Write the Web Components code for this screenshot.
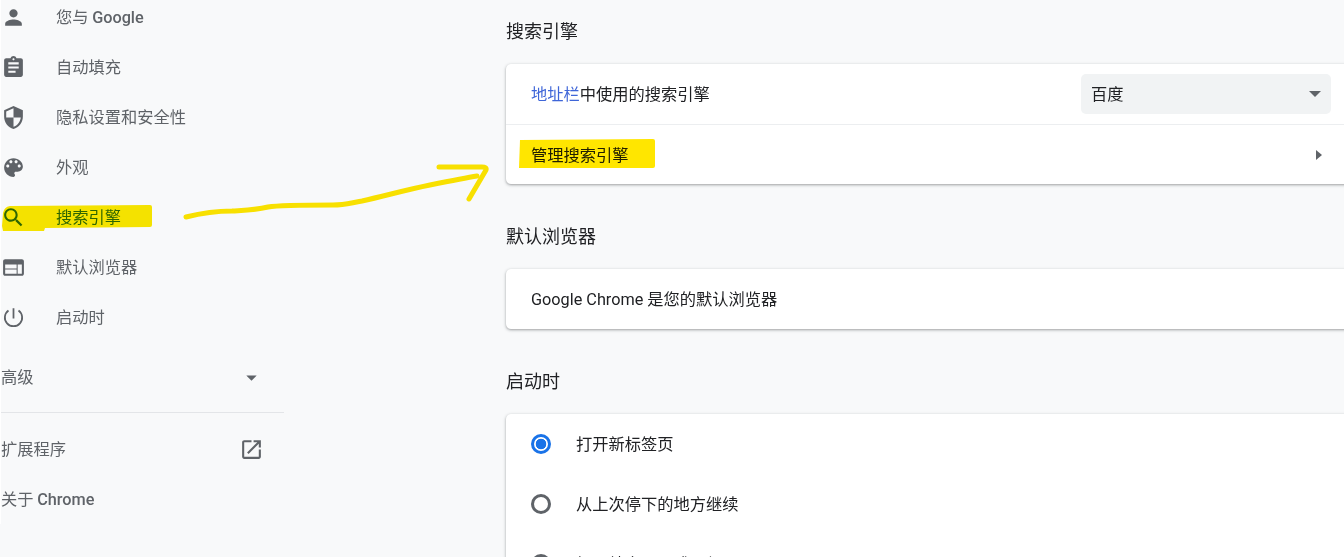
<!DOCTYPE html>
<html lang="zh-CN">
<head>
<meta charset="utf-8">
<title>设置</title>
<style>
  html, body { margin: 0; height: 100%; }
  body {
    background: #f8f9fa;
    overflow: hidden;
    font-family: "Noto Sans CJK SC", Roboto, sans-serif;
  }
  settings-row a { color: #3f66d8; }
  settings-row span { font-family: Roboto, "Noto Sans CJK SC", sans-serif; }
  nav-item b { font-family: Roboto, sans-serif; font-weight: 500; }
</style>
</head>
<body>

<settings-app>
  <settings-nav slot="nav">
    <nav-item icon="person">您与 <b>Google</b></nav-item>
    <nav-item icon="assignment">自动填充</nav-item>
    <nav-item icon="security">隐私设置和安全性</nav-item>
    <nav-item icon="palette">外观</nav-item>
    <nav-item icon="search" marked>搜索引擎</nav-item>
    <nav-item icon="web">默认浏览器</nav-item>
    <nav-item icon="power">启动时</nav-item>
    <nav-item plain trailing="arrow" class="advanced">高级</nav-item>
    <nav-item plain trailing="launch" class="extensions">扩展程序</nav-item>
    <nav-item plain>关于 <b>Chrome</b></nav-item>
  </settings-nav>

  <settings-section heading="搜索引擎">
    <settings-row>
      <span><a>地址栏</a>中使用的搜索引擎</span>
      <select-box slot="end">百度</select-box>
    </settings-row>
    <settings-row divided>
      管理搜索引擎
      <sub-arrow slot="end"></sub-arrow>
    </settings-row>
  </settings-section>

  <settings-section heading="默认浏览器">
    <settings-row><span>Google Chrome 是您的默认浏览器</span></settings-row>
  </settings-section>

  <settings-section heading="启动时">
    <radio-row checked>打开新标签页</radio-row>
    <radio-row>从上次停下的地方继续</radio-row>
    <radio-row>打开特定网页或一组网页</radio-row>
  </settings-section>
</settings-app>

<marker-layer></marker-layer>

<script>
  const ICONS = {
    person: 'M12 12c2.21 0 4-1.79 4-4s-1.79-4-4-4-4 1.79-4 4 1.79 4 4 4zm0 2c-2.67 0-8 1.34-8 4v2h16v-2c0-2.66-5.33-4-8-4z',
    assignment: 'M19 3h-4.18C14.4 1.84 13.3 1 12 1c-1.3 0-2.4.84-2.82 2H5c-1.1 0-2 .9-2 2v14c0 1.1.9 2 2 2h14c1.1 0 2-.9 2-2V5c0-1.1-.9-2-2-2zm-7 0c.55 0 1 .45 1 1s-.45 1-1 1-1-.45-1-1 .45-1 1-1zm2 14H7v-2h7v2zm3-4H7v-2h10v2zm0-4H7V7h10v2z',
    security: 'M12 1L3 5v6c0 5.55 3.84 10.74 9 12 5.16-1.26 9-6.45 9-12V5l-9-4zm0 10.99h7c-.53 4.12-3.28 7.79-7 8.94V12H5V6.3l7-3.11v8.8z',
    palette: 'M12 3c-4.97 0-9 4.03-9 9s4.03 9 9 9c.83 0 1.5-.67 1.5-1.5 0-.39-.15-.74-.39-1.01-.23-.26-.38-.61-.38-.99 0-.83.67-1.5 1.5-1.5H16c2.76 0 5-2.24 5-5 0-4.42-4.03-8-9-8zm-5.5 9c-.83 0-1.5-.67-1.5-1.5S5.67 9 6.5 9 8 9.67 8 10.5 7.33 12 6.5 12zm3-4C8.67 8 8 7.33 8 6.5S8.67 5 9.5 5s1.5.67 1.5 1.5S10.33 8 9.5 8zm5 0c-.83 0-1.5-.67-1.5-1.5S13.67 5 14.5 5s1.5.67 1.5 1.5S15.33 8 14.5 8zm3 4c-.83 0-1.5-.67-1.5-1.5S16.67 9 17.5 9s1.5.67 1.5 1.5-.67 1.5-1.5 1.5z',
    search: 'M15.5 14h-.79l-.28-.27C15.41 12.59 16 11.11 16 9.5 16 5.91 13.09 3 9.5 3S3 5.91 3 9.5 5.91 16 9.5 16c1.61 0 3.09-.59 4.23-1.57l.27.28v.79l5 4.99L20.49 19l-4.99-5zm-6 0C7.01 14 5 11.99 5 9.5S7.01 5 9.5 5 14 7.01 14 9.5 11.99 14 9.5 14z',
    web: 'M20 4H4c-1.1 0-1.99.9-1.99 2L2 18c0 1.1.9 2 2 2h16c1.1 0 2-.9 2-2V6c0-1.1-.9-2-2-2zm-5 14H4v-4h11v4zm0-5H4V9h11v4zm5 5h-4V9h4v9z',
    launch: 'M19 19H5V5h7V3H5c-1.11 0-2 .9-2 2v14c0 1.1.89 2 2 2h14c1.1 0 2-.9 2-2v-7h-2v7zM14 3v2h3.59l-9.83 9.83 1.41 1.41L19 6.41V10h2V3h-7z',
    arrow: 'M7 10l5 5 5-5z'
  }

  const svgIcon = (name) => {
    // the power icon in the reference is thinner than the stock filled one, so stroke it
    const body = name === 'power'
      ? '<path fill="none" stroke="currentColor" stroke-width="1.7" d="M12 3v10M7.2 5.3A8.3 8.3 0 1 0 16.8 5.3"/>'
      : `<path fill="currentColor" d="${ICONS[name]}"/>`
    return `<svg viewBox="0 0 24 24" width="25" height="25">${body}</svg>`
  }

  // small helper, every element here is just a shadow root and a template string
  class Base extends HTMLElement {
    constructor () {
      super()
      this.attachShadow({mode: 'open'})
    }
    connectedCallback () {
      this.shadowRoot.innerHTML = this.render()
    }
  }

  class SettingsApp extends Base {
    render () {
      return `
      <style>
        :host { display: flex; height: 557px; overflow: hidden; }
        .nav { flex: 0 0 506px; }
        main { flex: 1; min-width: 0; padding-top: 11px; }
      </style>
      <div class="nav"><slot name="nav"></slot></div>
      <main><slot></slot></main>`
    }
  }

  class SettingsNav extends Base {
    render () {
      return `
      <style>
        :host {
          display: block;
          width: 283px;
          margin-top: -8px;
          border-left: 1px solid #fff;
        }
        ::slotted(.advanced) {
          box-sizing: border-box;
          height: 61px !important;
          margin-top: 10px;
          padding-bottom: 10px;
          border-bottom: 1px solid #e3e5e8;
        }
        ::slotted(.extensions) { margin-top: 11px; }
      </style>
      <slot></slot>`
    }
  }

  class NavItem extends Base {
    render () {
      const icon = this.getAttribute('icon')
      const trailing = this.getAttribute('trailing')
      return `
      <style>
        :host {
          display: flex;
          align-items: center;
          height: 50px;
          font-size: 16.25px;
          color: #5f6368;
        }
        :host([marked]) { color: #2f7020; }
        .icon { flex: 0 0 55px; display: flex; }
        svg { display: block; }
        .label { padding-bottom: 2px; }
        .end { margin-left: auto; margin-right: 20px; display: flex; }
      </style>
      ${icon ? `<span class="icon">${svgIcon(icon)}</span>` : ''}
      <span class="label"><slot></slot></span>
      ${trailing ? `<span class="end">${svgIcon(trailing)}</span>` : ''}`
    }
  }

  class SettingsSection extends Base {
    render () {
      return `
      <style>
        :host { display: block; margin-bottom: 32px; }
        h2 {
          margin: 0;
          height: 40px;
          line-height: 38px;
          padding-bottom: 13px;
          font-size: 18px;
          font-weight: 400;
          color: #202124;
        }
        .card {
          margin-right: -6px;
          background: #fff;
          border-radius: 5px;
          box-shadow: 0 1px 2px rgba(60,64,67,.3), 0 1px 3px 1px rgba(60,64,67,.15);
        }
      </style>
      <h2>${this.getAttribute('heading')}</h2>
      <div class="card"><slot></slot></div>`
    }
  }

  class SettingsRow extends Base {
    render () {
      return `
      <style>
        :host {
          display: flex;
          align-items: center;
          justify-content: space-between;
          box-sizing: border-box;
          height: 60px;
          padding: 0 19px 0 25px;
          font-size: 16.25px;
          color: #202124;
        }
        :host([divided]) { border-top: 1px solid #eceef0; }
        .text { padding-bottom: 2px; white-space: nowrap; }
      </style>
      <span class="text"><slot></slot></span>
      <slot name="end"></slot>`
    }
  }

  class SelectBox extends Base {
    render () {
      return `
      <style>
        :host {
          display: flex;
          align-items: center;
          justify-content: space-between;
          box-sizing: border-box;
          width: 250px;
          height: 40px;
          padding: 0 10px;
          background: #f1f3f4;
          border-radius: 5px;
          font-size: 16.25px;
          color: #202124;
        }
        .text { padding-bottom: 2px; }
        i { width: 0; height: 0; border: 6px solid transparent; border-top-color: #5f6368; border-bottom: 0; }
      </style>
      <span class="text"><slot></slot></span><i></i>`
    }
  }

  class SubArrow extends Base {
    render () {
      return `
      <style>
        :host {
          display: block;
          width: 0;
          height: 0;
          margin-right: 9px;
          border: 5.5px solid transparent;
          border-left: 6px solid #5f6368;
          border-right: 0;
        }
      </style>`
    }
  }

  class RadioRow extends Base {
    render () {
      return `
      <style>
        :host {
          display: flex;
          align-items: center;
          height: 60px;
          padding-left: 25px;
          font-size: 16.25px;
          color: #202124;
        }
        .radio {
          box-sizing: border-box;
          flex: none;
          width: 20px;
          height: 20px;
          margin-right: 25px;
          border: 3px solid #5f6368;
          border-radius: 50%;
        }
        :host([checked]) .radio {
          border-color: #1a73e8;
          background: radial-gradient(circle, #1a73e8 0 5px, #fff 5.6px);
        }
        .text { padding-bottom: 2px; }
      </style>
      <span class="radio"></span>
      <span class="text"><slot></slot></span>`
    }
  }

  // the yellow marker strokes somebody drew over the screenshot
  class MarkerLayer extends Base {
    render () {
      return `
      <style>
        :host {
          position: absolute;
          left: 0;
          top: 0;
          width: 1344px;
          height: 557px;
          pointer-events: none;
          mix-blend-mode: multiply;
        }
        svg { display: block; }
      </style>
      <svg width="1344" height="557" viewBox="0 0 1344 557">
        <path fill="#fbe800" d="M10 206 L150 205 Q152 205 152 207 L152 225 Q152 227 150 227 L45 228 L44 231 L3 231 L2 226 L3 213 Q4 207 10 206z"/>
        <path fill="#ffe600" d="M520 140 L653 139 Q655 139 655 141 L655 166 Q655 168 653 168 L519 168z"/>
        <path fill="none" stroke="#ffe600" stroke-width="5" stroke-linecap="round" stroke-linejoin="round"
          d="M186 217 C198 214 212 211 232 211 C250 210 256 210 268 207 C280 205 300 205 333 205 C345 205 350 203 362 201 C385 196 405 190 430 185 C450 181 465 178 477 176"/>
        <path fill="none" stroke="#ffe600" stroke-width="5" stroke-linecap="round" stroke-linejoin="round"
          d="M439 167 L482 167 Q487 167 486 170 L469 199"/>
      </svg>`
    }
  }

  customElements.define('settings-app', SettingsApp)
  customElements.define('settings-nav', SettingsNav)
  customElements.define('nav-item', NavItem)
  customElements.define('settings-section', SettingsSection)
  customElements.define('settings-row', SettingsRow)
  customElements.define('select-box', SelectBox)
  customElements.define('sub-arrow', SubArrow)
  customElements.define('radio-row', RadioRow)
  customElements.define('marker-layer', MarkerLayer)
</script>
</body>
</html>
